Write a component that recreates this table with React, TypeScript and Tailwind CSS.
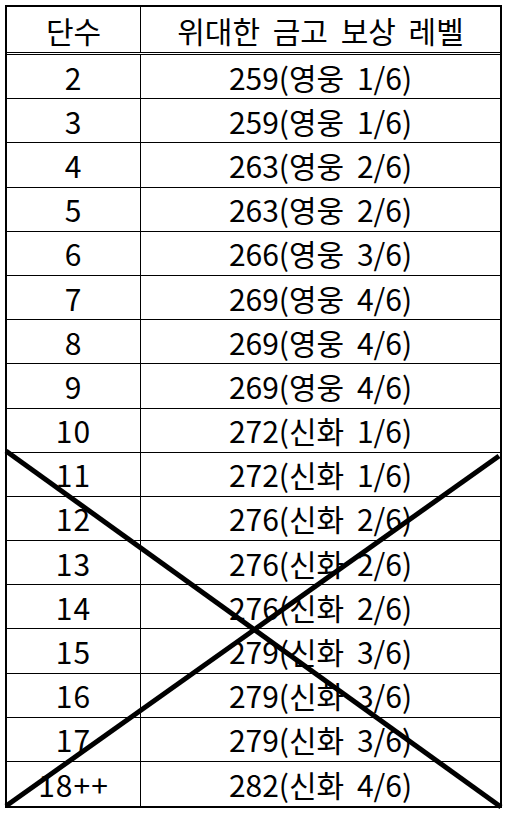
import React from 'react';

const rows: [string, string][] = [
  ['2', '259(영웅 1/6)'],
  ['3', '259(영웅 1/6)'],
  ['4', '263(영웅 2/6)'],
  ['5', '263(영웅 2/6)'],
  ['6', '266(영웅 3/6)'],
  ['7', '269(영웅 4/6)'],
  ['8', '269(영웅 4/6)'],
  ['9', '269(영웅 4/6)'],
  ['10', '272(신화 1/6)'],
  ['11', '272(신화 1/6)'],
  ['12', '276(신화 2/6)'],
  ['13', '276(신화 2/6)'],
  ['14', '276(신화 2/6)'],
  ['15', '279(신화 3/6)'],
  ['16', '279(신화 3/6)'],
  ['17', '279(신화 3/6)'],
  ['18++', '282(신화 4/6)'],
];

export default function App() {
  return (
    <div
      className="w-[507px] h-[815px] bg-white overflow-hidden pt-[5px] pl-[5px]"
      style={{ fontFamily: '"Noto Sans CJK KR", "Noto Sans", sans-serif' }}
    >
      <div className="relative w-[497px] border-2 border-black text-black text-[30px] leading-none [word-spacing:6px]">
        {/* header */}
        <div className="flex h-[48px] border-b-[3px] border-double border-black">
          <div className="w-[134px] flex items-center justify-center border-r border-black">단수</div>
          <div className="flex-1 flex items-center justify-center">위대한 금고 보상 레벨</div>
        </div>
        {rows.map(([step, level], i) => (
          <div
            key={step}
            className={`flex h-[44.2px] ${i < rows.length - 1 ? 'border-b border-black' : ''}`}
          >
            <div className="w-[134px] flex items-center justify-center border-r border-black tracking-[1px]">{step}</div>
            <div className="flex-1 flex items-center justify-center">{level}</div>
          </div>
        ))}
        {/* cross-out mark over the lower rows */}
        <svg
          className="absolute left-[-7px] top-[-7px] pointer-events-none"
          width="507"
          height="815"
          viewBox="0 0 507 815"
        >
          <line x1="6" y1="451" x2="501" y2="807" stroke="#000" strokeWidth="5" />
          <line x1="6" y1="806" x2="499" y2="456" stroke="#000" strokeWidth="5" />
        </svg>
      </div>
    </div>
  );
}
